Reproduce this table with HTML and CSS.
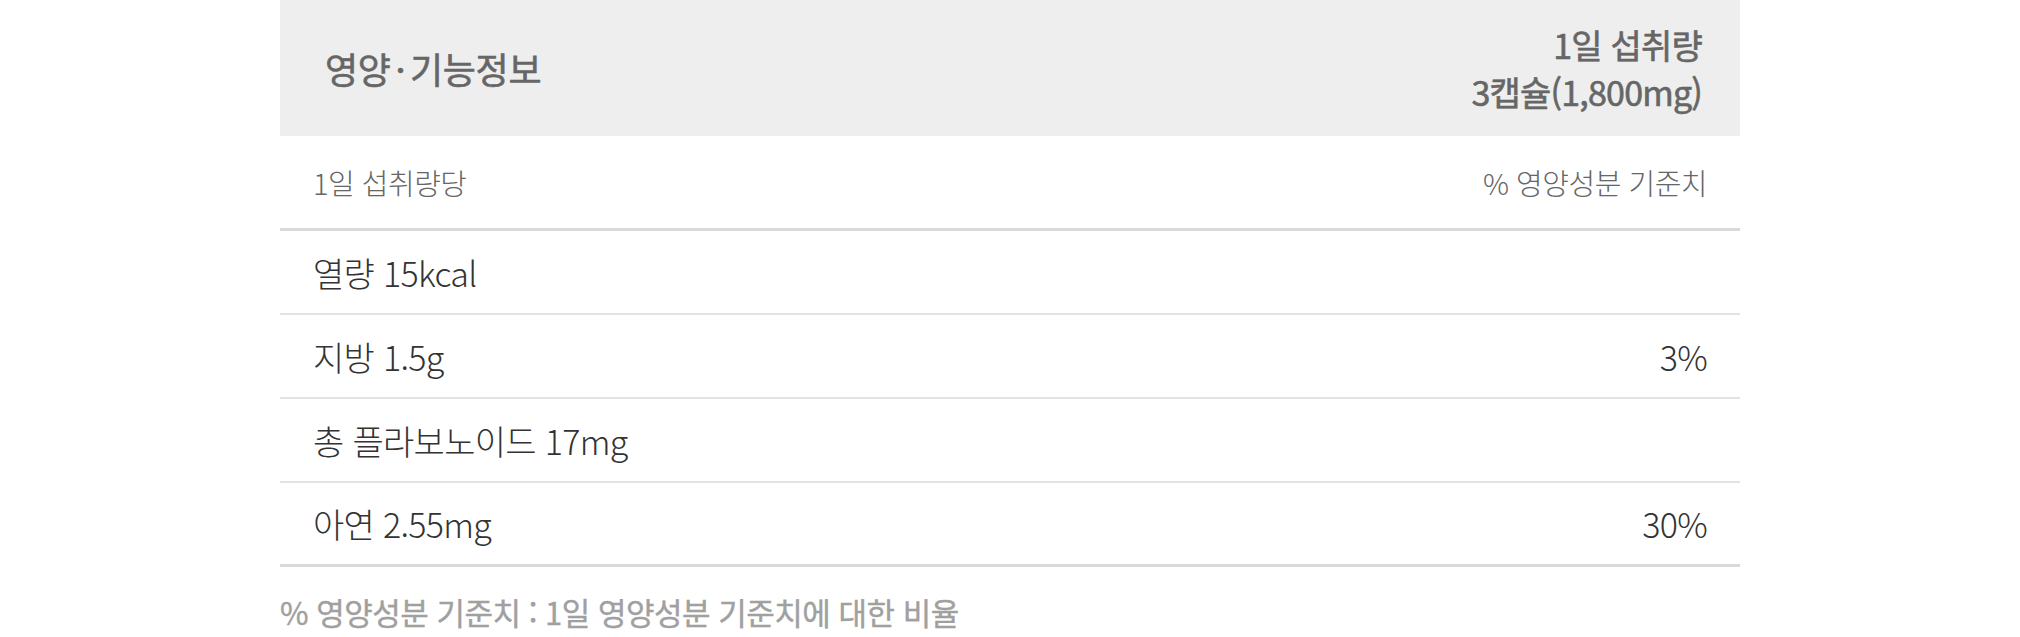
FILE: index.html
```html
<!DOCTYPE html>
<html lang="ko">
<head>
<meta charset="utf-8">
<link rel="stylesheet" href="styles.css">
</head>
<body>
<div class="wrap">
  <div class="head">
    <div class="head-title">영양 · 기능정보</div>
    <div class="head-dose">1일 섭취량<br>3캡슐(1,800mg)</div>
  </div>
  <div class="sub">
    <span>1일 섭취량당</span>
    <span>% 영양성분 기준치</span>
  </div>
  <div class="row"><span>열량 15kcal</span><span></span></div>
  <div class="row"><span>지방 1.5g</span><span>3%</span></div>
  <div class="row"><span>총 플라보노이드 17mg</span><span></span></div>
  <div class="row last"><span>아연 2.55mg</span><span>30%</span></div>
  <p class="note">% 영양성분 기준치 : 1일 영양성분 기준치에 대한 비율</p>
</div>
</body>
</html>
```
FILE: styles.css
```css
* { box-sizing: border-box; }
body {
  margin: 0;
  background: #fff;
  font-family: "Noto Sans CJK KR", "Noto Sans", sans-serif;
}
.wrap {
  width: 1460px;
  margin: 0 auto;
}
.head {
  height: 136px;
  background: #eeeeee;
  display: flex;
  justify-content: space-between;
  align-items: center;
  padding: 0 38px 0 45px;
  color: #666;
  font-weight: 400;
  -webkit-text-stroke: 0.6px #666;
  font-size: 34px;
}
.head-title { font-size: 36px; letter-spacing: -0.3px; word-spacing: -5px; }
.head-dose {
  text-align: right;
  line-height: 47px;
  letter-spacing: -0.8px;
}
.sub {
  height: 95px;
  display: flex;
  justify-content: space-between;
  align-items: center;
  padding: 0 33px 0 33px;
  border-bottom: 3px solid #d9d9d9;
  font-size: 29px;
  font-weight: 300;
  color: #666;
  letter-spacing: -0.5px;
}
.row {
  height: 84px;
  display: flex;
  justify-content: space-between;
  align-items: center;
  padding: 0 33px 0 33px;
  border-bottom: 2px solid #e2e2e2;
  font-size: 34px;
  font-weight: 300;
  color: #333;
  letter-spacing: -0.7px;
}
.row.last { border-bottom: 3px solid #d9d9d9; }
.note {
  margin: 22px 0 0;
  font-size: 31px;
  font-weight: 400;
  -webkit-text-stroke: 0.4px #a0a0a0;
  color: #a0a0a0;
  letter-spacing: -0.5px;
}
```
